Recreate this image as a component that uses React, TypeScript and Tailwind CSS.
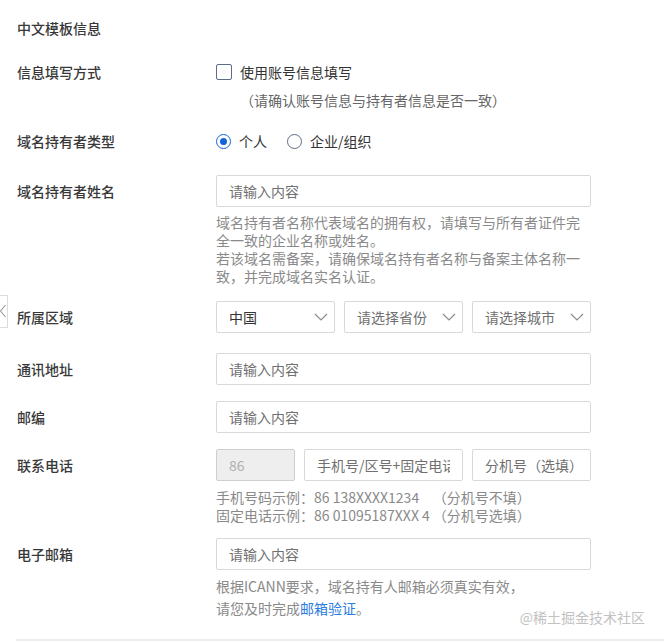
import type { ReactNode } from "react";

const font = "font-['Noto_Sans_CJK_SC','Noto_Sans',sans-serif]";
const labelCls = "w-[199px] shrink-0 text-[14px] font-medium text-[#383838]";
const fieldCls =
  "h-[32px] min-w-0 border border-[#d9d9d9] rounded-[2px] bg-white px-[12px] text-[14px] text-[#333] placeholder:text-[#707070] outline-none";
const inputCls = `${fieldCls} w-full`;

function Row({ label, children, className = "", labelClass = "leading-[32px]" }: { label: string; children: ReactNode; className?: string; labelClass?: string }) {
  return (
    <div className={`flex items-start ${className}`}>
      <div className={`${labelCls} ${labelClass}`}>{label}</div>
      <div className="w-[375px]">{children}</div>
    </div>
  );
}

function Chevron() {
  return (
    <svg width="14" height="8" viewBox="0 0 14 8" fill="none" className="shrink-0">
      <polyline points="1,1 7,7 13,1" stroke="#8c8c8c" strokeWidth="1.2" />
    </svg>
  );
}

function Select({ value, muted, className = "" }: { value: string; muted?: boolean; className?: string }) {
  return (
    <div className={`flex h-[32px] items-center justify-between border border-[#d9d9d9] rounded-[2px] bg-white pl-[12px] pr-[6px] ${className}`}>
      <span className={`text-[14px] ${muted ? "text-[#707070]" : "text-[#333]"}`}>{value}</span>
      <Chevron />
    </div>
  );
}

export default function App() {
  return (
    <div className={`relative h-[642px] w-[664px] overflow-hidden bg-white ${font}`}>
      {/* collapsed side handle */}
      <div className="absolute left-[-14px] top-[295px] h-[33px] w-[22px] border border-[#dcdcdc] bg-white" />
      <svg className="absolute left-0 top-[304px]" width="6" height="14" viewBox="0 0 6 14" fill="none">
        <polyline points="5.5,1 0.5,7 5.5,13" stroke="#9a9a9a" strokeWidth="1.1" />
      </svg>

      <div className="pl-[17px] pt-[18px]">
        <h3 className="text-[14px] leading-[20px] font-medium text-[#383838]">中文模板信息</h3>

        <Row label="信息填写方式" className="mt-[24px]" labelClass="leading-[20px]">
          <label className="flex h-[20px] items-center gap-[8px]">
            <span className="h-[16px] w-[16px] rounded-[2px] border border-[#5d6d84] bg-white" />
            <span className="text-[14px] text-[#333]">使用账号信息填写</span>
          </label>
          <p className="mt-[8px] pl-[24px] text-[14px] leading-[20px] text-[#666]">（请确认账号信息与持有者信息是否一致）</p>
        </Row>

        <Row label="域名持有者类型" className="mt-[21px]" labelClass="leading-[20px]">
          <div className="flex h-[20px] items-center">
            <span className="flex h-[15px] w-[15px] items-center justify-center rounded-full border-[1.5px] border-[#1565d8]">
              <span className="h-[7px] w-[7px] rounded-full bg-[#1565d8]" />
            </span>
            <span className="ml-[8px] text-[14px] text-[#333]">个人</span>
            <span className="ml-[20px] h-[15px] w-[15px] rounded-full border border-[#5d6d84]" />
            <span className="ml-[8px] text-[14px] text-[#333]">企业/组织</span>
          </div>
        </Row>

        <Row label="域名持有者姓名" className="mt-[24px]">
          <input className={inputCls} placeholder="请输入内容" />
          <p className="mt-[6px] text-[14px] leading-[18px] text-[#8a8a8a]">
            域名持有者名称代表域名的拥有权，请填写与所有者证件完全一致的企业名称或姓名。
            <br />
            若该域名需备案，请确保域名持有者名称与备案主体名称一致，并完成域名实名认证。
          </p>
        </Row>

        <Row label="所属区域" className="mt-[16px]">
          <div className="flex gap-[9px]">
            <Select value="中国" className="w-[119px]" />
            <Select value="请选择省份" muted className="w-[119px]" />
            <Select value="请选择城市" muted className="w-[119px]" />
          </div>
        </Row>

        <Row label="通讯地址" className="mt-[20px]">
          <input className={inputCls} placeholder="请输入内容" />
        </Row>

        <Row label="邮编" className="mt-[16px]">
          <input className={inputCls} placeholder="请输入内容" />
        </Row>

        <Row label="联系电话" className="mt-[16px]">
          <div className="flex gap-[9px]">
            <div className="flex h-[32px] w-[79px] shrink-0 items-center rounded-[2px] border border-[#cfcfcf] bg-[#eeeeee] px-[12px] text-[14px] text-[#b0b0b0]">86</div>
            <input className={`${fieldCls} w-[159px] shrink-0`} placeholder="手机号/区号+固定电话" />
            <input className={`${fieldCls} w-[119px] shrink-0`} placeholder="分机号（选填）" />
          </div>
          <div className="mt-[7px] grid grid-cols-[auto_auto] justify-start gap-x-[3px] text-[14px] leading-[18px] text-[#8a8a8a]">
            <span>手机号码示例：86 138XXXX1234</span>
            <span>（分机号不填）</span>
            <span>固定电话示例：86 01095187XXX 4</span>
            <span>（分机号选填）</span>
          </div>
        </Row>

        <Row label="电子邮箱" className="mt-[14px]">
          <input className={inputCls} placeholder="请输入内容" />
          <p className="mt-[5px] text-[14px] leading-[22px] text-[#8a8a8a]">
            根据ICANN要求，域名持有人邮箱必须真实有效，
            <br />
            请您及时完成<a className="text-[#2b7be0]">邮箱验证</a>。
          </p>
        </Row>
      </div>

      <div className="ml-[16px] mt-[20px] h-[2px] bg-[#ececec]" />

      <span className="absolute right-[19px] top-[607px] text-[14px] leading-[20px] text-[#c2c2c2]">@稀土掘金技术社区</span>
    </div>
  );
}
